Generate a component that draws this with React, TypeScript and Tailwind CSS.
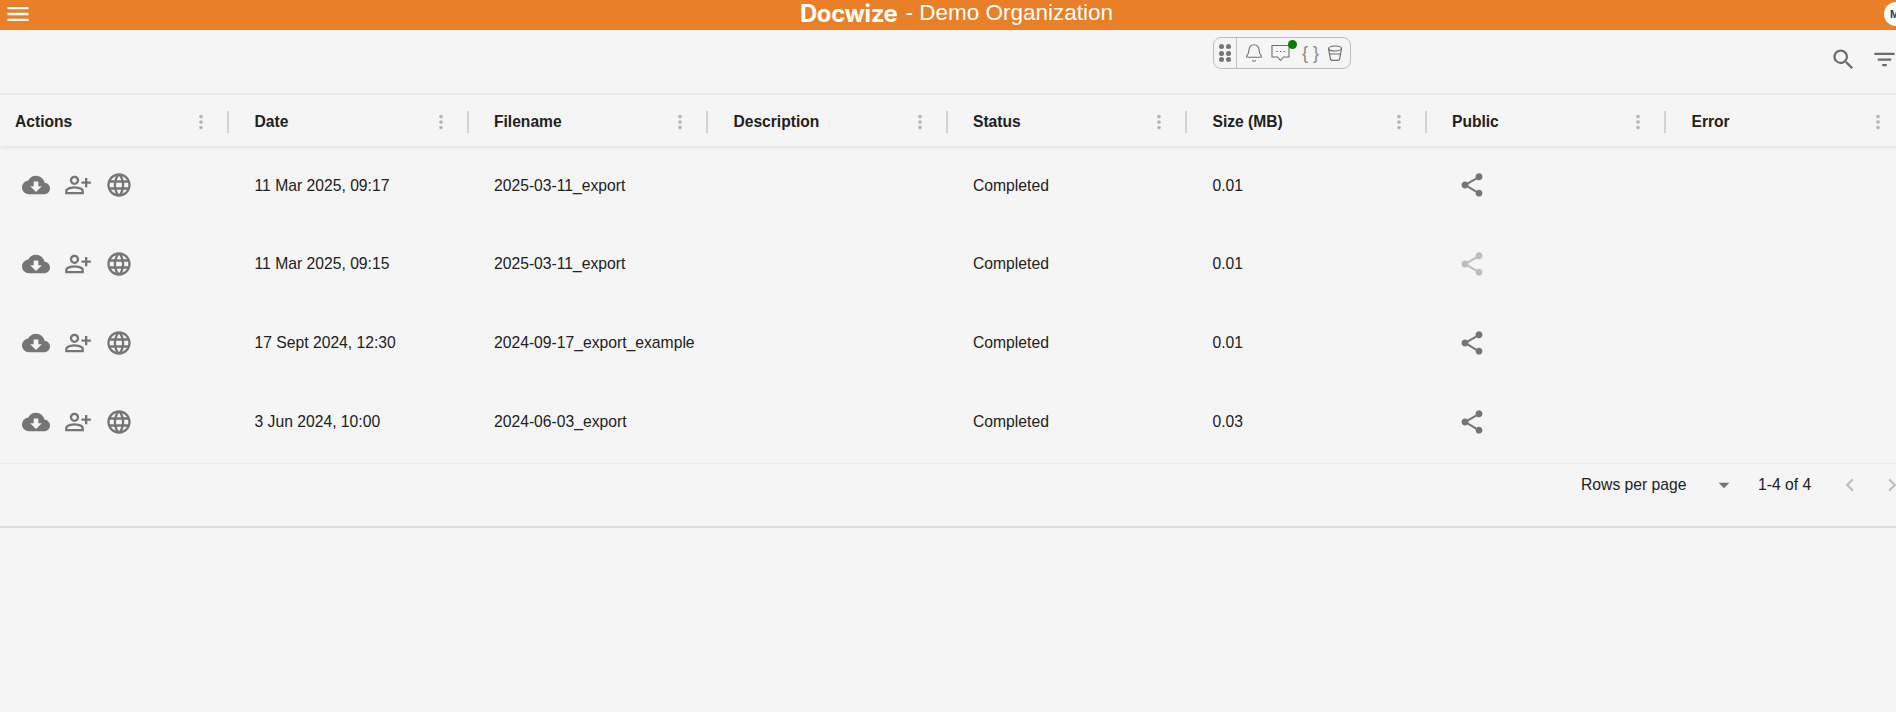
import { Bell } from "lucide-react";
import {
  MdArrowDropDown,
  MdChevronLeft,
  MdChevronRight,
  MdCloudDownload,
  MdFilterList,
  MdLanguage,
  MdMenu,
  MdMoreVert,
  MdOutlinePersonAddAlt,
  MdSearch,
  MdShare,
} from "react-icons/md";

const columns = ["Actions", "Date", "Filename", "Description", "Status", "Size (MB)", "Public", "Error"];

const rows = [
  { date: "11 Mar 2025, 09:17", filename: "2025-03-11_export", size: "0.01", shared: true },
  { date: "11 Mar 2025, 09:15", filename: "2025-03-11_export", size: "0.01", shared: false },
  { date: "17 Sept 2024, 12:30", filename: "2024-09-17_export_example", size: "0.01", shared: true },
  { date: "3 Jun 2024, 10:00", filename: "2024-06-03_export", size: "0.03", shared: true },
];

const gridCols = "grid grid-cols-[repeat(8,239.5px)] w-[1916px]";

function Toolbar() {
  return (
    <div className="flex items-center h-8 w-[138px] ml-[1213px] rounded-lg border-[1.5px] border-[#bdbdbd] text-[#6f6f6f]">
      <div className="flex items-center justify-center w-[23px] h-full border-r border-[#c4c4c4]">
        <div className="grid grid-cols-2 gap-[1.7px]">
          {[0, 1, 2, 3, 4, 5].map((i) => (
            <span key={i} className="w-[5px] h-[5px] rounded-full bg-[#757575]" />
          ))}
        </div>
      </div>
      <Bell className="w-[20px] h-[20px] ml-[7px]" strokeWidth={1.3} />
      <div className="relative ml-[7px] w-[19px] h-[18px]">
        <svg viewBox="0 0 19 18" className="w-[19px] h-[18px]" fill="none" stroke="currentColor" strokeWidth="1.1">
          <path d="M1 1.500h17v11.500h-5.500l-3 3.500-3-3.500h-5.500z" />
          <path d="M5.500 7.500h1.500M9 7.500h1.500M12.500 7.500h1.500" />
        </svg>
        <span className="absolute -top-[4px] -right-[7px] w-[9px] h-[9px] rounded-full bg-[#008000]" />
      </div>
      <span className="ml-[12px] text-[18px] leading-none font-light text-[#8a8a8a] tracking-[5px]">{"{}"}</span>
      <svg viewBox="0 0 16 17" className="w-4 h-[17px] ml-[3px]" fill="none" stroke="currentColor" strokeWidth="1.200">
        <ellipse cx="8" cy="3.500" rx="6.500" ry="2.500" />
        <path d="M1.500 3.500 3.500 14.500c.3 1.200 8.700 1.200 9 0l2-11M2.500 9h11" />
      </svg>
    </div>
  );
}

export default function App() {
  return (
    <div className="relative h-[712px] w-[1896px] overflow-hidden bg-[#f5f5f5] font-['Liberation_Sans',Arial,sans-serif] text-[15.700px] text-[#212121]">
      <header className="relative flex items-center justify-center h-[30px] pb-[3px] bg-[#e97f26] text-white">
        <MdMenu className="absolute left-[4px] top-0 w-[28px] h-[28px]" />
        <span className="ml-[17px] text-[24px] leading-none font-['Inter',sans-serif] font-bold tracking-[-0.4px]">Docwize</span>
        <span className="ml-[8px] text-[22.500px] leading-none">- Demo Organization</span>
        <span className="absolute left-[1884px] top-[2px] flex items-center w-6 h-6 pl-[6px] rounded-full bg-white text-[11px] font-bold text-[#1f3a5f]">M</span>
      </header>

      <div className="relative h-[65px] pt-[7px] border-b-2 border-[#ebebeb]">
        <Toolbar />
        <MdSearch className="absolute left-[1830px] top-[16px] w-[27px] h-[27px] text-[#6b6b6b]" />
        <MdFilterList className="absolute left-[1871px] top-[16px] w-[27px] h-[27px] text-[#6b6b6b]" />
      </div>

      <div className={`${gridCols} h-[51px] pt-[3px] items-center shadow-[0_2px_4px_rgba(0,0,0,0.08)]`}>
        {columns.map((name) => (
          <div key={name} className="flex items-center h-full pl-[15px] text-[15.600px] font-bold">
            <span className="w-[175px]">{name}</span>
            <MdMoreVert className="w-[22px] h-[22px] text-[#b5b5b5]" />
            {name !== "Error" && <span className="ml-[15px] w-[2px] h-[22px] bg-[#d4d4d4]" />}
          </div>
        ))}
      </div>

      <div className="pb-[2px] border-b border-[#ebebeb]">
        {rows.map((row) => (
          <div key={row.date} className={`${gridCols} h-[78.750px] items-center`}>
            <div className="flex items-center pl-[21.500px] text-[#757575]">
              <MdCloudDownload className="w-[28px] h-[28px]" />
              <MdOutlinePersonAddAlt className="ml-[14px] w-[28px] h-[28px]" />
              <MdLanguage className="ml-[13px] w-[28px] h-[28px]" />
            </div>
            <div className="pl-[15px]">{row.date}</div>
            <div className="pl-[15px]">{row.filename}</div>
            <div />
            <div className="pl-[15px]">Completed</div>
            <div className="pl-[15px]">{row.size}</div>
            <div className="pl-[21px]">
              <MdShare className={`w-[28px] h-[28px] ${row.shared ? "text-[#757575]" : "text-[#bdbdbd]"}`} />
            </div>
            <div />
          </div>
        ))}
      </div>

      <div className="flex items-center h-[64px] w-[1920px] pb-[20px] border-b-2 border-[#dedede] pl-[1581px] whitespace-nowrap">
        <span className="w-[106px] shrink-0">Rows per page</span>
        <MdArrowDropDown className="shrink-0 ml-[24px] w-[26px] h-[26px] text-[#757575]" />
        <span className="shrink-0 ml-[21px] w-[52px]">1-4 of 4</span>
        <MdChevronLeft className="shrink-0 ml-[27px] w-[26px] h-[26px] text-[#bdbdbd]" />
        <MdChevronRight className="shrink-0 ml-[16px] w-[26px] h-[26px] text-[#bdbdbd]" />
      </div>
    </div>
  );
}
